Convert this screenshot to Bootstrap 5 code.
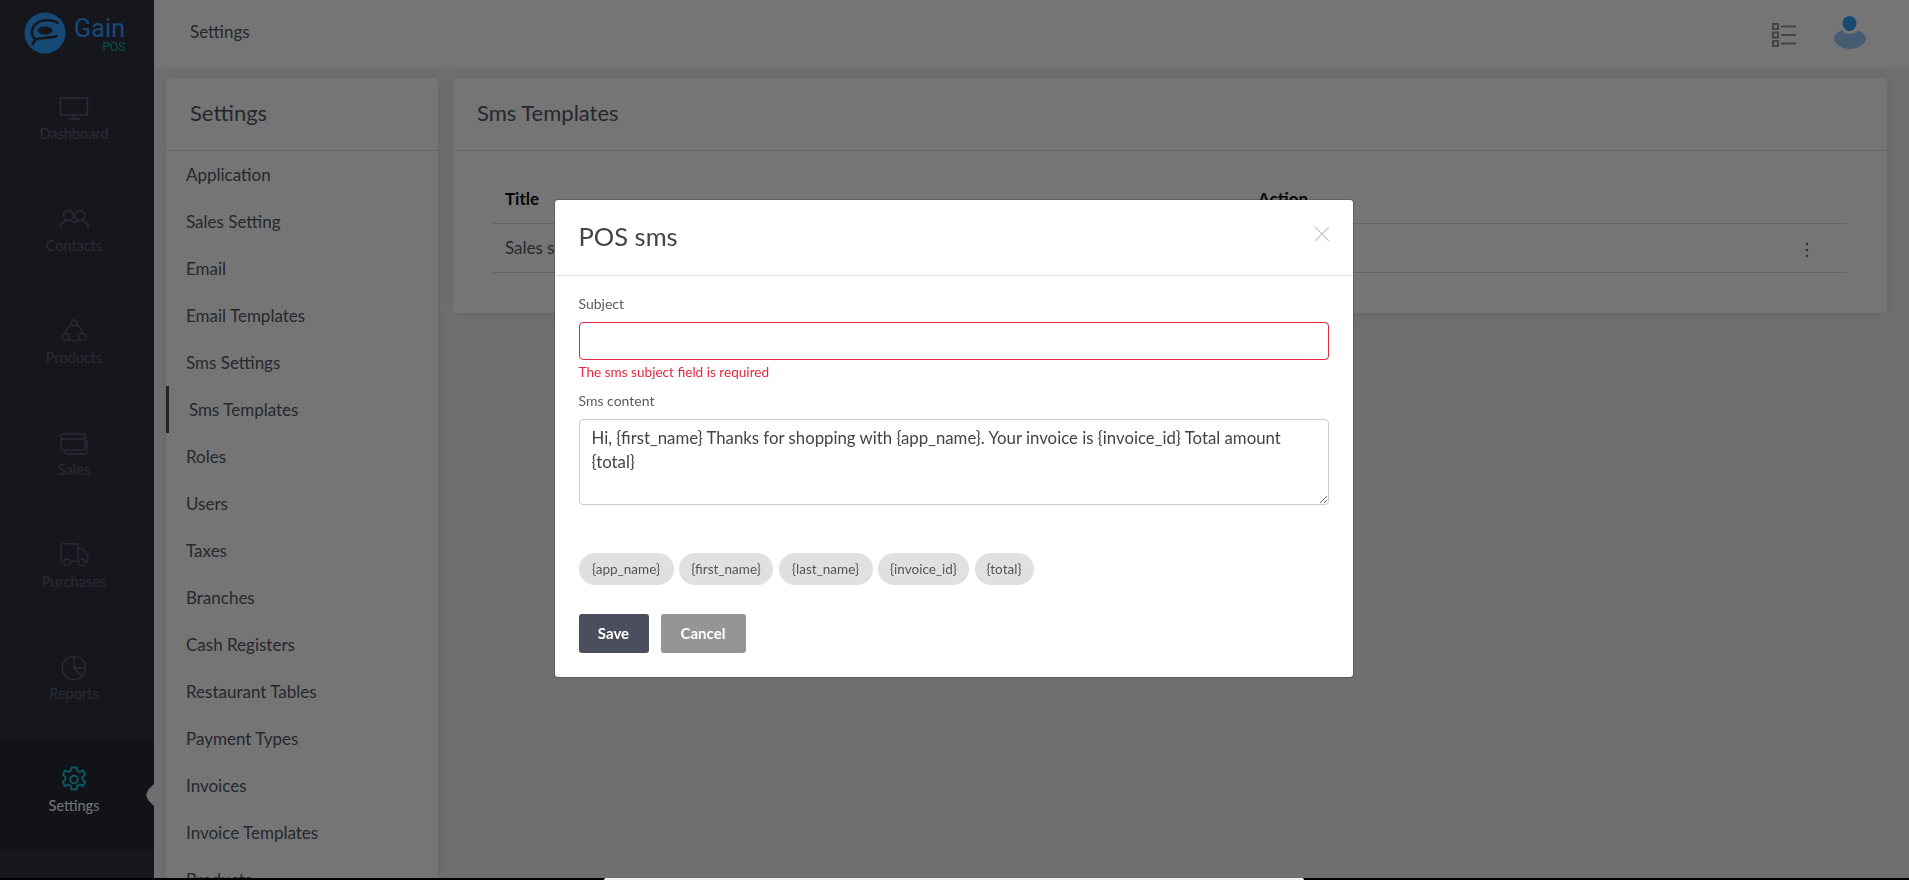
<!DOCTYPE html>
<html lang="en"><head><meta charset="utf-8"><title>POS</title>
<link href="https://cdn.jsdelivr.net/npm/bootstrap@5.3.0/dist/css/bootstrap.min.css" rel="stylesheet">
<style>
html,body{height:880px;overflow:hidden}
body{font-family:Lato,"Liberation Sans",sans-serif;background:#f0f1f4;color:#555766;font-size:16px}
.shell{height:880px;overflow:hidden}
.side{width:154px;flex:none;background:#303441;color:#5a5e78;height:880px}
.brand{height:66px;flex:none;border-bottom:1px solid #2b2f3b;padding-left:24px;gap:8px}
.brand-name{font-family:Roboto,sans-serif;line-height:1;color:#30a0ff}
.brand-name b{font-weight:400;font-size:25px;display:block;letter-spacing:.2px;margin-top:3px}
.brand-name i{font-style:normal;font-size:12px;color:#12a9a0;display:block;text-align:right}
.sitem{height:112px;flex:none;font-size:14.500px;padding:31px 6px 0 0;gap:2px;position:relative}
.sitem svg{display:block}
.sitem.on{background:#272b37;color:#fff}
.up-2{margin-top:-2px}
.up-2b{margin-top:-2px;margin-bottom:2px}
.up-3{margin-top:-3px}
.notch{position:absolute;right:0;top:46px;width:8px;height:22px;background:#f0f1f4;clip-path:polygon(100% 0,30% 25%,0 50%,30% 75%,100% 100%)}
.main{min-width:0;height:880px}
.topbar{height:67px;flex:none;background:#fff;padding:0 43px 3px 36px;font-size:17px}
.top-icons{gap:38px}
.list-ico{margin-top:6px}
.panes{padding:11px 22px 0 12px;gap:15px;min-height:0;overflow:hidden}
.pane{background:#fff;border-radius:4px;box-shadow:0 0 12px rgba(0,0,0,.08)}
.pane-left{width:272px;flex:none;height:813px;overflow:hidden;border-radius:4px 4px 0 0}
.pane-right{height:235px}
.pane-head{height:73px;border-bottom:1px solid #e4e4e4;padding:0 0 3px 24px;font-size:22px;color:#555766}
.menu-row{height:47px;padding-left:20px;font-size:17px;color:#555766}
.menu-row.on{border-left:3px solid #4b4e5c}
.tbl{padding:0 40px 0 39px}
.thead-row{height:73px;border-bottom:1px solid #ddd;color:#111;font-weight:700;font-size:17px;padding:39px 12px 0 13px;line-height:1}
.tbody-row{height:49px;border-bottom:1px solid #ddd;padding:0 38px 0 13px;color:#555766;font-size:17px}
.dots{margin-top:4px}
.hcol{width:570px}
.act-col{width:577px}
.modal-backdrop.show.dim-layer{opacity:.54;z-index:1040}
.dlg{max-width:800px;margin:199px auto 0;width:800px;transform:translateX(0)!important;left:-1px}
.dlg .modal-content{border-radius:4px;height:479px;display:block}
.dlg-head{height:76px;border-bottom:1px solid #e6e6e6;padding:0 23px 2px 24px}
.dlg-title{font-size:25.500px;color:#444;font-weight:400;margin:0}
.dlg-x{background:none;border:0;padding:0;line-height:0;margin-top:-5px}
.dlg-body{padding:20px 24px 0}
.flabel{font-size:14px;color:#5a5a5a;margin:0 0 10px;line-height:16px;display:block}
.in-err{height:38px;border:1px solid #e8283f!important;background-image:none!important;border-radius:4px}
.err-msg{font-size:13.600px;color:#e8283f;line-height:16px;margin:4px 0 13px}
.in-area{height:86px;font-size:16.800px;color:#444;border:1px solid #c9ccd3;border-radius:4px;padding:6px 12px;line-height:24px;font-family:inherit}
.tag-row{gap:5.500px;margin-top:48px}
.tagpill{height:32px;border-radius:16px;background:#e0e0e0;color:#555;font-size:13.500px;line-height:32px;text-align:center;width:94px}
.tagpill:nth-child(1){width:95px}
.tagpill:nth-child(4){width:91px}
.tagpill:nth-child(5){width:59px}
.act-row{gap:12px;margin-top:29px}
.act-save,.act-cancel{height:39px;font-size:15px;font-weight:700;color:#fff;border:0;border-radius:3px;padding:0}
.act-save{width:70px;background:#4b4e5c}
.act-cancel{width:85px;background:#949693}
.strip{position:fixed;left:0;right:0;top:878px;height:2px;background:#000;z-index:2000}
.strip span{position:absolute;left:604px;width:700px;top:0;height:2px;background:#f1f1f1;border-radius:3px 3px 0 0}
</style></head>
<body>
<div class="shell d-flex">
 <aside class="side d-flex flex-column">
  <div class="brand d-flex align-items-center">
   <svg width="42" height="42" viewBox="0 0 42 42"><circle cx="21" cy="21" r="20.500" fill="#30a0ff"/><ellipse cx="21" cy="18.500" rx="7.500" ry="4" fill="#303441"/><path d="M34.500 11.500C28 6.500 15 7 9.500 14.500 7 19 7.500 24 11.500 27.500L8 33M11.500 27.500C17 25.500 28 26 33.500 24" fill="none" stroke="#303441" stroke-width="2.600"/></svg>
   <div class="brand-name"><b>Gain</b><i>POS</i></div>
  </div>
  <div class="sitem d-flex flex-column align-items-center"><svg width="30" height="24" viewBox="0 0 30 24" fill="none" stroke="#5a5e78" stroke-width="1.500"><rect x="1.500" y="1" width="27" height="17"/><path d="M15 18v3M9 22h12"/></svg><span>Dashboard</span></div>
  <div class="sitem d-flex flex-column align-items-center"><svg width="30" height="24" viewBox="0 0 30 24" fill="none" stroke="#5a5e78" stroke-width="1.300"><circle cx="9.500" cy="6.500" r="5"/><circle cx="21" cy="6.500" r="5"/><path d="M1 19c0-4 3-7.500 8.500-7.500 3 0 5 1 6 2.500M29.500 19c0-4-3-7.500-8.500-7.500-2.500 0-4.500 1-5.500 2.500"/></svg><span>Contacts</span></div>
  <div class="sitem d-flex flex-column align-items-center"><svg class="up-2b" width="26" height="24" viewBox="0 0 26 24" fill="none" stroke="#5a5e78" stroke-width="1.300"><circle cx="13" cy="4" r="3"/><circle cx="4.500" cy="18" r="3.500"/><circle cx="21.500" cy="18" r="3.500"/><path d="M10.500 6C7 8 4.500 11 4.500 14.500M15.500 6c3.500 2 6 5 6 8.500M8 20c3 2.500 7 2.500 10 0"/></svg><span>Products</span></div>
  <div class="sitem d-flex flex-column align-items-center"><svg width="30" height="24" viewBox="0 0 30 24" fill="none" stroke="#5a5e78" stroke-width="1.300"><path d="M2 15V3a2 2 0 0 1 2-2h20a2 2 0 0 1 2 2v12a2 2 0 0 1-2 2H4a2 2 0 0 1-2-2zM2 6h24M6 17v2a2 2 0 0 0 2 2h18a2 2 0 0 0 2-2V7"/></svg><span>Sales</span></div>
  <div class="sitem d-flex flex-column align-items-center"><svg class="up-2b" width="30" height="24" viewBox="0 0 32 26" fill="none" stroke="#5a5e78" stroke-width="1.400"><path d="M5 20H2V1h18v19h-8M20 6h5l6 7v7h-3M20 20h1"/><circle cx="8.500" cy="21" r="3.500"/><circle cx="24.500" cy="21" r="3.500"/></svg><span>Purchases</span></div>
  <div class="sitem d-flex flex-column align-items-center"><svg class="up-2" width="26" height="26" viewBox="0 0 28 28" fill="none" stroke="#5a5e78" stroke-width="1.500"><circle cx="14" cy="14" r="12.500"/><path d="M14 2v12h12.500M14 14l8 9"/></svg><span>Reports</span></div>
  <div class="sitem on d-flex flex-column align-items-center"><svg class="up-3" width="26" height="27" viewBox="0 0 26 27" fill="none" stroke="#15c6d6" stroke-width="1.900" stroke-linejoin="round"><path d="M10.500 1.500h5l.8 3.400 2.400 1.100 3.100-1.700 2.400 4.300-2.600 2.300v2.700l2.600 2.300-2.400 4.300-3.100-1.700-2.400 1.100-.8 3.900h-5l-.8-3.900-2.400-1.100-3.100 1.700-2.400-4.300 2.600-2.300v-2.700L1.800 8.600l2.400-4.300 3.100 1.700 2.400-1.100z"/><circle cx="13" cy="13.500" r="3.800"/></svg><span>Settings</span><div class="notch"></div></div>
 </aside>
 <div class="main flex-grow-1 d-flex flex-column">
  <header class="topbar d-flex align-items-center justify-content-between">
   <span>Settings</span>
   <div class="top-icons d-flex align-items-center">
    <svg class="list-ico" width="24" height="24" viewBox="0 0 24 24" fill="none" stroke="#949494" stroke-width="2"><rect x="1" y="1" width="5" height="5"/><rect x="1" y="9.500" width="5" height="5"/><rect x="1" y="18" width="5" height="5"/><path d="M9 3.500h15M9 12h15M9 20.500h15"/></svg>
    <svg class="list-ava" width="32" height="33" viewBox="0 0 32 33"><path d="M8 14C4 16 0 19 0 22c0 6 8 11 16 11s16-5 16-11c0-3-4-6-8-8-2 3-5 4-8 4s-6-1-8-4z" fill="#98c8f8"/><ellipse cx="15.500" cy="7.500" rx="7" ry="7.500" fill="#34a0ff"/></svg>
   </div>
  </header>
  <div class="panes d-flex flex-grow-1">
   <div class="pane pane-left">
    <div class="pane-head d-flex align-items-center">Settings</div>
    <div class="pt-0">
     <div class="menu-row d-flex align-items-center">Application</div>
     <div class="menu-row d-flex align-items-center">Sales Setting</div>
     <div class="menu-row d-flex align-items-center">Email</div>
     <div class="menu-row d-flex align-items-center">Email Templates</div>
     <div class="menu-row d-flex align-items-center">Sms Settings</div>
     <div class="menu-row on d-flex align-items-center">Sms Templates</div>
     <div class="menu-row d-flex align-items-center">Roles</div>
     <div class="menu-row d-flex align-items-center">Users</div>
     <div class="menu-row d-flex align-items-center">Taxes</div>
     <div class="menu-row d-flex align-items-center">Branches</div>
     <div class="menu-row d-flex align-items-center">Cash Registers</div>
     <div class="menu-row d-flex align-items-center">Restaurant Tables</div>
     <div class="menu-row d-flex align-items-center">Payment Types</div>
     <div class="menu-row d-flex align-items-center">Invoices</div>
     <div class="menu-row d-flex align-items-center">Invoice Templates</div>
     <div class="menu-row d-flex align-items-center">Products</div>
    </div>
   </div>
   <div class="pane pane-right flex-grow-1">
    <div class="pane-head d-flex align-items-center">Sms Templates</div>
    <div class="tbl">
     <div class="thead-row d-flex"><div class="hcol flex-grow-1">Title</div><div class="act-col">Action</div></div>
     <div class="tbody-row d-flex align-items-center justify-content-between"><span>Sales sms</span><svg class="dots" width="4" height="16" viewBox="0 0 4 16" fill="#6a6c7c"><circle cx="2" cy="2" r="1.300"/><circle cx="2" cy="8" r="1.300"/><circle cx="2" cy="14" r="1.300"/></svg></div>
    </div>
   </div>
  </div>
 </div>
</div>
<div class="modal-backdrop show dim-layer"></div>
<div class="modal d-block" tabindex="-1" role="dialog" aria-modal="true">
 <div class="modal-dialog dlg">
  <div class="modal-content">
   <div class="dlg-head d-flex align-items-center justify-content-between">
    <h5 class="dlg-title">POS sms</h5>
    <button class="dlg-x" aria-label="Close"><svg width="16" height="16" viewBox="0 0 16 16" stroke="#c8c8c8" stroke-width="1.200"><path d="M1 1l14 14M15 1L1 15"/></svg></button>
   </div>
   <div class="dlg-body">
    <label class="flabel">Subject</label>
    <input class="form-control is-invalid in-err" type="text">
    <div class="err-msg">The sms subject field is required</div>
    <label class="flabel">Sms content</label>
    <textarea class="form-control in-area">Hi, {first_name} Thanks for shopping with {app_name}. Your invoice is {invoice_id} Total amount {total}</textarea>
    <div class="tag-row d-flex">
     <span class="tagpill">{app_name}</span><span class="tagpill">{first_name}</span><span class="tagpill">{last_name}</span><span class="tagpill">{invoice_id}</span><span class="tagpill">{total}</span>
    </div>
    <div class="act-row d-flex">
     <button class="act-save">Save</button><button class="act-cancel">Cancel</button>
    </div>
   </div>
  </div>
 </div>
</div>
<div class="strip"><span></span></div>
<script src="https://cdn.jsdelivr.net/npm/bootstrap@5.3.0/dist/js/bootstrap.bundle.min.js"></script>
</body></html>
